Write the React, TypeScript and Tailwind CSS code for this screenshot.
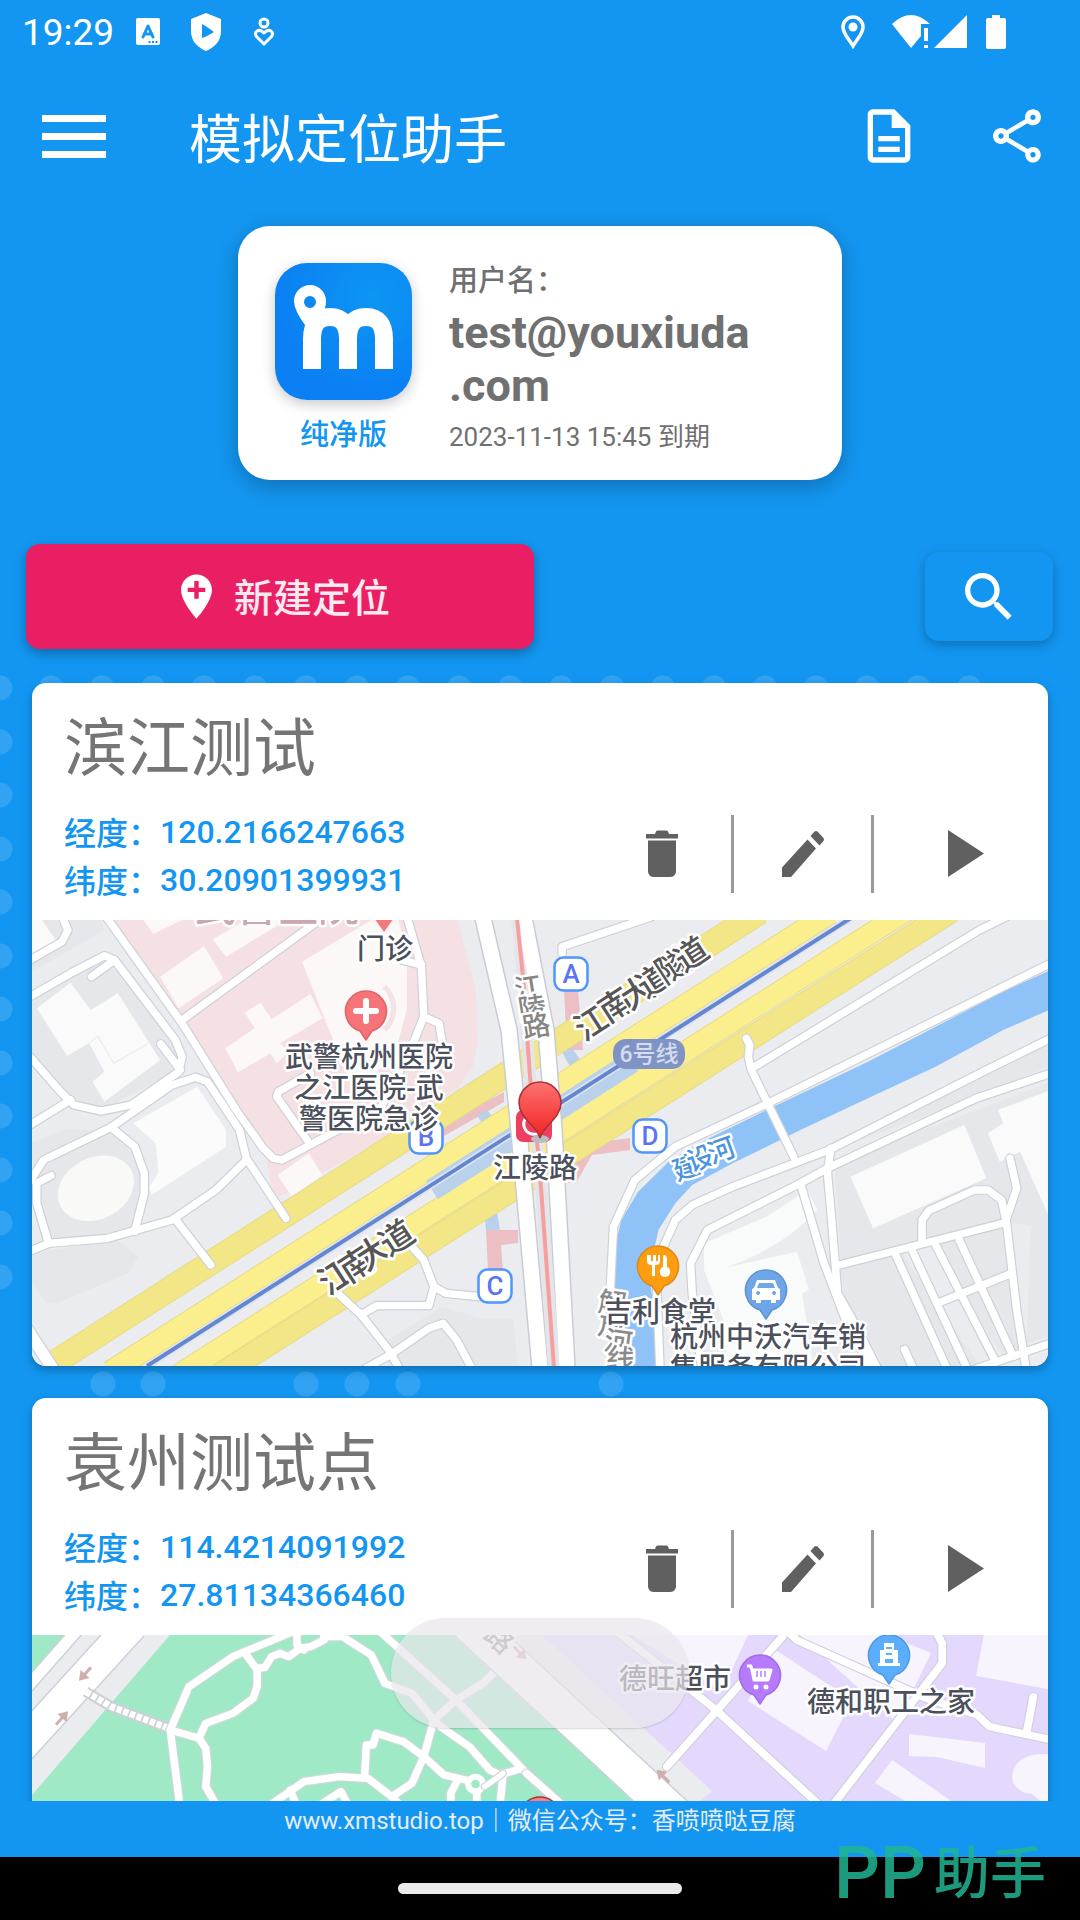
import type { ReactNode } from 'react';
import { MdAddLocation, MdOutlineDescription, MdOutlineShare, MdSearch } from 'react-icons/md';

type RoadsProps = { paths: string[]; width?: number; casing?: string };

// White streets with a thin grey casing, all casings below all fills so junctions merge.
function Roads({ paths, width = 22, casing = '#cdd0d8' }: RoadsProps) {
  return (
    <g fill="none" strokeLinejoin="round" strokeLinecap="round">
      {paths.map((d) => (
        <path key={`c${d}`} d={d} stroke={casing} strokeWidth={width + 7} />
      ))}
      {paths.map((d) => (
        <path key={`f${d}`} d={d} stroke="#fff" strokeWidth={width} />
      ))}
    </g>
  );
}

type LabelProps = {
  x: number | string;
  y: number | string;
  children: string;
  color?: string;
  size?: number;
  rotate?: number;
  anchor?: 'start' | 'middle';
};

function Label({ x, y, children, color = '#4b505c', size = 28, rotate, anchor = 'middle' }: LabelProps) {
  return (
    <text
      x={x}
      y={y}
      rotate={rotate}
      textAnchor={anchor}
      fontSize={size}
      fontWeight={500}
      fill={color}
      stroke="#fff"
      strokeWidth={5}
      strokeLinejoin="round"
      paintOrder="stroke"
    >
      {children}
    </text>
  );
}

function Poi({ x, y, fill, stroke, children }: { x: number; y: number; fill: string; stroke: string; children?: ReactNode }) {
  return (
    <g transform={`translate(${x} ${y})`}>
      <path d="M0 29 L-6 20 A20.5 20.5 0 1 1 6 20 Z" fill={fill} stroke={stroke} strokeWidth="1.500" strokeLinejoin="round" />
      {children}
    </g>
  );
}

function Exit({ x, y, name }: { x: number; y: number; name: string }) {
  return (
    <g transform={`translate(${x} ${y})`}>
      <rect x="-16.500" y="-16.500" width="33" height="33" rx="9" fill="#fff" stroke="#4f95fb" strokeWidth="2.500" />
      <text x="0" y="9" textAnchor="middle" fontSize="26" fontWeight={500} fill="#5a74f2">
        {name}
      </text>
    </g>
  );
}

function BinjiangMap() {
  return (
    <svg viewBox="0 0 1016 446" className="block h-auto w-full bg-[#ebecef]" role="img" aria-label="滨江测试 地图">
      {/* west blocks */}
      <g transform="translate(-2 -10) scale(.338 .3333)">
        <path d="M0 30H210L220 60L100 130L0 190Z" fill="#e5e7ea" />
        <path d="M0 260L220 140L450 430L440 480L210 600L110 570L0 440Z" fill="#e5e7ea" />
        <path d="M0 700L100 660L240 660L330 760L310 960L230 985L50 1000L20 850Z" fill="#e5e7ea" />
        <path d="M0 1030L260 990L320 1040L290 1090L80 1180L50 1180L0 1110Z" fill="#e5e7ea" />
        <path d="M1060 1290L1220 1190L1330 1225H1430L1445 1380H1060Z" fill="#e5e7ea" />
        <path d="M245 30H1265L1320 240L1325 400L1310 470L1270 530L1080 670L720 870L700 750L620 620Z" fill="#f5e1e4" />
        <path d="M20 295L120 218L180 300L260 250L385 450L220 575L185 515L220 485L175 400L110 437Z" fill="#fafafa" />
        <path d="M175 400L200 378L248 460L350 400" fill="none" stroke="#e0e0e2" strokeWidth="2" />
        <path d="M0 30H35L78 92L0 140Z" fill="#fafafa" />
        <path d="M305 640L495 530L580 660V710L360 855L352 830L380 790L372 700Z" fill="#fafbfa" />
        <ellipse cx="195" cy="835" rx="118" ry="92" transform="rotate(-28 195 835)" fill="#f9f9f8" />
        <g fill="#fbf8f7">
          <path d="M385 200L515 108L572 205L440 295Z" />
          <path d="M335 30H450L365 72Z" />
          <path d="M540 88L640 30H760L580 140Z" />
          <path d="M805 155L1010 30H1090L1115 130V300L1080 430L1010 500H940Z" />
          <path d="M635 308L682 278L715 328L830 252L865 325L740 400L765 425L730 460L712 430L615 487L578 415L665 355Z" />
          <path d="M732 795L825 730L865 795L775 860Z" />
        </g>
        <path d="M1048 230C1085 265 1085 325 1048 360" fill="none" stroke="#f3e3e5" strokeWidth="16" />
      </g>

      {/* east blocks and river */}
      <g transform="translate(498 -10) scale(.338 .3333)">
        <path d="M920 1080L1100 1030L1340 1380H1040L930 1180Z M900 760L1532 520V960L1400 930L1160 990L920 1050Z" fill="#e5e7ea" />
        <path d="M1180 1000L1400 940L1470 1300L1400 1340Z M1480 960L1532 900V1280L1470 1300Z" fill="#e5e7ea" />
        <path d="M900 720L1532 400V470L1320 560Z" fill="#e5e7ea" />
        <path
          d="M1540 180V298L1400 360L1200 470L1000 565L800 660L600 760L480 825L430 880L380 960L365 1030L358 1130L385 1400H305L245 1130L255 1000L270 930L320 845L410 755L500 700L720 590L1000 455L1200 350L1400 245Z"
          fill="#8fc3f8"
        />
        <path d="M948 800L1285 645L1350 805L1015 955Z M1385 600L1540 540V930L1450 725L1390 755L1355 670L1400 640Z" fill="#fafafa" />
        <path d="M515 1000L700 920L820 840L850 900Q740 1020 570 1075L790 1025L825 1140L805 1150L840 1380H580V1250L515 1080Z" fill="#f9fbfa" />
      </g>

      {/* metro passages */}
      <path d="M532 70h14l5 60h-16z M542 232l18-9 38-5v12l-38 5-16 28-8 0z M454 310h32v13l-17 2 2 26h-15z M408 206l64-34v10l-60 34z" fill="#ebbfc4" />
      <path d="M452 290l12-4 4 24h-14z M445 196l10-6 14 17-12 5z M530 132l10-4 14 20-12 6z" fill="#b9d1ea" />

      {/* Jiangnan avenue */}
      <g fill="none">
        <g stroke="#e6dc88">
          <path d="M14 448L728 -8" strokeWidth="25" />
          <path d="M78 452L798 -7" strokeWidth="23" />
          <path d="M146 455L874 -9" strokeWidth="22" />
          <path d="M188 455L919 -9" strokeWidth="24" />
        </g>
        <path d="M14 448L728 -8" stroke="#f2e687" strokeWidth="23" />
        <path d="M78 452L798 -7" stroke="#faee8d" strokeWidth="21" />
        <path d="M146 455L874 -9" stroke="#faee8d" strokeWidth="20" />
        <path d="M188 455L919 -9" stroke="#f2e687" strokeWidth="22" />
        <path d="M400 270L600 142" stroke="#b9d1ea" strokeWidth="22" />
        <path d="M115 446L819 -2" stroke="#dfe4f2" strokeWidth="7" />
        <path d="M115 446L819 -2" stroke="#6487cf" strokeWidth="4" />
      </g>

      {/* Jiangling road and line 1 */}
      <g fill="none">
        <path d="M451 -2L477 110L486 200L508 448" stroke="#c9ccd4" strokeWidth="18" />
        <path d="M492 -2L514 110L522 210L535 448" stroke="#c9ccd4" strokeWidth="18" />
        <path d="M485 -2L491 57L498 157L507 240L522 448" stroke="#e4e5e9" strokeWidth="12" />
        <path d="M451 -2L477 110L486 200L508 448" stroke="#fff" strokeWidth="15" />
        <path d="M492 -2L514 110L522 210L535 448" stroke="#fff" strokeWidth="15" />
        <path d="M485 -2L491 57L498 157L507 240L522 448" stroke="#f79f9f" strokeWidth="4" />
      </g>

      <g transform="translate(-2 -10) scale(.338 .3333)">
        <Roads
          paths={[
            'M0 260L120 190L220 137L250 150L430 390L450 440L440 485L300 585L210 603L130 585L90 545L0 440',
            'M250 150L182 200',
            'M0 150L95 95L112 60L95 20',
            'M0 645L120 570',
            'M387 402L445 480',
            'M225 20L450 340L610 600L690 715L720 745L745 750L1040 590L1130 410L1165 320L1158 170L1115 20',
            'M-10 830L40 750L240 652L420 525L490 502L525 515L620 660L640 745L757 925',
            'M240 652L310 710L338 790L338 850L310 965',
            'M62 797L20 820V880L55 1000',
            'M-10 1028L55 1000L230 985L420 930L550 840L640 750',
            'M432 930L535 1065',
            'M450 330L870 20',
            'M985 1380L1065 1335L1180 1255L1222 1240L1262 1290L1315 1390',
            'M910 1150L980 1215L1065 1325L1100 1390',
            'M980 1215L1025 1187H1180L1195 1130L1165 1050L1130 1010',
            'M1195 1130L1230 1150L1330 1160',
            'M820 690L730 560L735 545L830 490',
            'M1165 320L1210 340L1220 400',
            'M1158 165L1100 150',
          ]}
        />
        <Roads paths={['M-20 1240L70 1380']} width={34} />
      </g>

      <g transform="translate(498 -10) scale(.338 .3333)">
        <Roads
          paths={[
            'M95 130V110L360 20',
            'M640 385L650 405L646 440L655 480L780 740',
            'M665 470L1330 60L1410 20',
            'M250 1390L238 1130L247 950L310 810L430 710L700 582L1540 160',
            'M385 1390L375 1130',
            'M395 1010L430 930L480 885L600 830L880 722L1350 480L1540 385',
            'M510 1390L480 1150L475 1060L525 960L800 820L880 775L1320 565L1540 490',
            'M890 715L880 790L890 900L910 1150L960 1240L1035 1390',
            'M800 820L870 1060L930 1220L1015 1390',
            'M915 1065L1400 940',
            'M1160 1000V930L1180 902L1315 840H1355L1395 870L1410 940L1440 1200L1470 1390',
            'M1405 940L1440 835L1420 745',
            'M1080 1030L1240 1390',
            'M1130 1020L1300 1390',
            'M1200 1005L1375 1350',
            'M1270 990L1430 1340',
            'M1205 1180L1425 1090',
            'M1310 1380L1540 1300',
            'M1108 1318L1140 1390',
          ]}
        />
      </g>

      <Label x={245} y={1} size={41} color="#cba8af">武警医院</Label>
      <path d="M342 -2h20l-10 14z" fill="#f27a7c" />
      <Label x={353} y={39}>门诊</Label>

      <Poi x={334} y={91} fill="#f67478" stroke="#dc6468">
        <path d="M-10 0H10M0 -10V10" stroke="#fff" strokeWidth="6" strokeLinecap="round" />
      </Poi>

      <Exit x={539} y={54} name="A" />
      <Exit x={394} y={217} name="B" />
      <Exit x={463} y={366} name="C" />
      <Exit x={618} y={216} name="D" />

      <Label x={337} y={147}>武警杭州医院</Label>
      <Label x={337} y={178}>之江医院-武</Label>
      <Label x={337} y={209}>警医院急诊</Label>

      <Label x="484 488 492" y="80 100 118" rotate={-9} color="#868686" anchor="start">江陵路</Label>
      <Label x="552 576 598 614 633 652" y="122 104 91 79 65 53" rotate={-33} size={33} color="#565656" anchor="start">江南大道隧道</Label>
      <Label x="296 317 334 357" y="376 364 352 337" rotate={-33} size={34} color="#565656" anchor="start">江南大道</Label>
      <Label x="645 659 680" y="261 252 244" rotate={-20} size={27} color="#4a94dc" anchor="start">建设河</Label>

      <rect x="581" y="119" width="72" height="30" rx="13" fill="#7f94c4" />
      <text x="617" y="142" textAnchor="middle" fontSize="23" fontWeight={500} fill="#d5dcee">6号线</text>

      <Label x="565 565 571 573" y="391 414 430 447" rotate={8} color="#8a8a8a" anchor="start">解放河线</Label>

      <Poi x={626} y={346} fill="#fe9d10" stroke="#d98b1c">
        <path d="M-11 -11v6q0 4 4 4h1v11h3V-1h1q4 0 4-4v-6h-2v6h-2v-6h-3v6h-2v-6z" fill="#fff" />
        <path d="M6 -11c2 0 3 2 3 4v8c5 2 4 10-2 10s-7-8-2-10v-8c0-2 0-4 1-4z" fill="#fff" />
      </Poi>
      <Poi x={734} y={370} fill="#6ea6e8" stroke="#5d92d2">
        <path
          d="M-9 -10h18l3 8 2 1v11h-4v3h-5v-3h-10v3h-5v-3h-4v-11l2-1z M-7 -7l-2 5h18l-2-5z M-8 1a2 2 0 1 0 .1 0z M8 1a2 2 0 1 0 .1 0z"
          fill="#fff"
          fillRule="evenodd"
        />
      </Poi>
      <Label x={628} y={402}>吉利食堂</Label>
      <Label x={736} y={427}>杭州中沃汽车销</Label>
      <Label x={736} y={458}>售服务有限公司</Label>

      {/* metro station under the selected position */}
      <rect x="484" y="190" width="36" height="32" rx="7" fill="#ee3f60" />
      <path d="M493 199a10 10 0 0 0 18 10" fill="none" stroke="#fff" strokeWidth="3" />
      <Label x={503} y={258}>江陵路</Label>
      <ellipse cx="508" cy="219" rx="9" ry="4" fill="#b9bcc4" />
      <defs>
        <linearGradient id="marker" x1="0" y1="0" x2="0" y2="1">
          <stop offset="0" stopColor="#fd7272" />
          <stop offset="1" stopColor="#f0221f" />
        </linearGradient>
      </defs>
      <path
        d="M508 218C505 206 487 198 487 183A21 21 0 0 1 529 183C529 198 511 206 508 218Z"
        fill="url(#marker)"
        stroke="#a83232"
        strokeWidth="1.500"
      />
    </svg>
  );
}

function Arrow({ x, y, angle }: { x: number; y: number; angle: number }) {
  return <path transform={`translate(${x} ${y}) rotate(${angle})`} d="M-9 -1.500H0V-6L9 0L0 6V1.500H-9Z" fill="#cfaeae" />;
}

function YuanzhouMap() {
  return (
    <svg viewBox="0 0 1016 446" className="block h-auto w-full bg-[#9fe9c7]" role="img" aria-label="袁州测试点 地图">
      {/* commercial area on the right */}
      <path d="M500 0H1016V446H760L668 166Z" fill="#e4d9fd" />
      <path d="M430 0L600 166L668 166L680 156L510 0Z" fill="#ebecef" />
      <path d="M600 0H716L690 56Z M768 0H855L899 18L865 88Z M952 0H1016V54L944 41Z" fill="#f7f4fe" />
      <path d="M742 14L820 65L794 116L716 66Z M877 99L953 108V133L905 122L877 121Z M860 125L925 170H880L843 148Z" fill="#f7f4fe" />
      <path d="M1016 119Q982 118 980 142Q982 157 1000 159L1016 172Z" fill="#f7f4fe" />

      {/* avenue in the upper left corner */}
      <path d="M0 0H138L0 160Z" fill="#ebecef" />
      <path d="M0 0H38L0 42Z" fill="#9fe9c7" />
      <g fill="none">
        <path d="M-10 58L48 -8" stroke="#cdd0d8" strokeWidth="14" />
        <path d="M-10 58L48 -8" stroke="#fff" strokeWidth="11" />
        <path d="M-24 126L100 -10" stroke="#cdd0d8" strokeWidth="34" />
        <path d="M-24 126L100 -10" stroke="#fff" strokeWidth="31" />
      </g>

      <g transform="translate(-2 -15) scale(.338 .3333)">
        <path d="M165 215L240 260L410 325" fill="none" stroke="#cdd0d8" strokeWidth="32" />
        <path d="M165 215L240 260L410 325" fill="none" stroke="#fff" strokeWidth="20" strokeDasharray="16 5" />
        <Roads
          casing="#cfd8d8"
          paths={[
            'M445 570L415 330L470 200L600 110L790 30',
            'M415 330L500 355L520 310L600 280L660 235L672 200V150L640 105',
            'M500 355L520 385L525 440L520 500L560 570',
            'M672 145L695 142L715 110L740 100L765 110L800 85L830 80L870 60V30',
            'M870 50H925L1010 105L1050 190L1130 220L1195 300L1215 320L1300 380L1360 450L1390 465L1455 445',
            'M790 30V75L810 90',
            'M1020 20L1260 240L1455 445L1600 590',
            'M1195 300L1260 240L1340 190L1425 105',
            'M1195 300L1165 410L1130 490L1070 530L1000 475L915 470L810 485L690 570',
            'M990 470L995 375H1015L1025 340L1105 365L1165 410L1225 465L1290 480',
            'M770 510L790 560',
            'M850 560L920 515L950 570',
            'M1070 530L1110 570',
            'M1265 480L1245 520V570',
            'M1400 460L1390 560',
            'M1322 510V560',
          ]}
        />
        <circle cx="1318" cy="492" r="22" fill="#9fe9c7" stroke="#fff" strokeWidth="18" />
        <Roads casing="#cfd8d8" width={16} paths={['M1345 500L1400 460']} />
      </g>

      <path d="M436 -12L650 186" stroke="#cdd0d8" strokeWidth="38" fill="none" />
      <path d="M436 -12L650 186" stroke="#fff" strokeWidth="35" fill="none" />

      <g transform="translate(498 -15) scale(.3508 .3333)">
        <Roads
          casing="#d3cfdf"
          paths={[
            'M-10 460L140 600',
            'M390 440L720 50',
            'M230 20L525 265L830 560',
            'M720 20L760 60L1130 235L1275 285L1310 320L1490 360',
            'M860 560L1175 130V70L1150 20',
            'M1415 340L1435 230',
          ]}
        />
      </g>

      <Arrow x={53} y={39} angle={132} />
      <Arrow x={30} y={83} angle={-48} />
      <Arrow x={488} y={18} angle={45} />
      <Arrow x={631} y={141} angle={-135} />

      <Label x={450} y={2} size={28} rotate={42} color="#8f8f8f" anchor="start">路</Label>
      <Label x={643} y={54}>德旺超市</Label>
      <Poi x={728} y={40} fill="#b67bfc" stroke="#a06ce2">
        <path d="M-13 -9h4l3 14h14l3-10h-18" fill="#fff" stroke="#fff" strokeWidth="3" strokeLinejoin="round" />
        <path d="M-3 -4v6M1 -4v6M5 -4v6" stroke="#b67bfc" strokeWidth="1.500" />
        <circle cx="-4" cy="12" r="2.500" fill="#fff" />
        <circle cx="6" cy="12" r="2.500" fill="#fff" />
      </Poi>
      <Poi x={857} y={20} fill="#5badfd" stroke="#4d9ae6">
        <path d="M-5 -12H5V-5H9V8H11V11H-11V8H-9V-5H-5Z M-3 -8V-6H3V-8Z M-3 -2V0H3V-2Z M-4 4V8H4V4Z" fill="#fff" fillRule="evenodd" />
      </Poi>
      <Label x={859} y={77}>德和职工之家</Label>
      <circle cx="508" cy="183" r="21" fill="#fd7f7f" stroke="#a83232" strokeWidth="1.500" />
    </svg>
  );
}

function StatusBar() {
  return (
    <div className="flex h-16 items-center justify-between pr-[73px] pl-[22px]">
      <div className="flex items-center">
        <span className="w-[113px] text-[37px] leading-none">19:29</span>
        <svg viewBox="0 0 26 28" className="h-7 w-[26px]" fill="none">
          <rect x="1" y="0" width="24" height="27" rx="2" fill="#fff" />
          <path d="M8 19L13 8L18 19M10 16H16" stroke="#1396f1" strokeWidth="3" strokeLinejoin="round" strokeLinecap="round" />
          <path d="M13.500 24H23" stroke="#1396f1" strokeWidth="2" strokeDasharray="2 1.500" />
        </svg>
        <svg viewBox="0 0 30 38" className="ml-[30px] h-[38px] w-[30px]">
          <path d="M15 0L30 6V18C30 28 24 34 15 38C6 34 0 28 0 18V6Z M11 13V25Q15 24 23 19Q15 13 11 11Z" fill="#fff" fillRule="evenodd" />
        </svg>
        <svg viewBox="0 0 22 30" className="ml-8 h-[30px] w-[22px]" fill="none" stroke="#fff" strokeWidth="3">
          <circle cx="11" cy="6" r="4" />
          <path d="M11 27L3.500 19.500C0 15 6 10.500 11 16C16 10.500 22 15 18.500 19.500Z" strokeLinejoin="round" />
        </svg>
      </div>
      <div className="flex items-center">
        <svg viewBox="0 0 24 34" className="h-[34px] w-6" fill="none">
          <path d="M12 31C8 24 2 19 2 12A10 10 0 0 1 22 12C22 19 16 24 12 31Z" stroke="#fff" strokeWidth="3.500" />
          <circle cx="12" cy="12" r="4.500" fill="#fff" />
        </svg>
        <svg viewBox="0 0 76 34" className="ml-[27px] h-[34px] w-[76px]" fill="#fff">
          <path d="M0 9Q19 -9 38 9H29V21L19 33Z" />
          <path d="M32 13h4v13h-4z M32 30h4v3h-4z" />
          <path d="M42 33L75 0V33Z" />
        </svg>
        <svg viewBox="0 0 22 34" className="ml-[17px] h-[34px] w-[22px]" fill="#fff">
          <path d="M7 0h8v3h4q2 0 2 2v27q0 2-2 2H3q-2 0-2-2V5q0-2 2-2h4z" />
        </svg>
      </div>
    </div>
  );
}

function AppLogo() {
  return (
    <svg viewBox="0 0 137 137" className="h-[137px] w-[137px] rounded-[32px] shadow-[0_4px_14px_rgba(0,0,0,0.22)]" role="img" aria-label="logo">
      <defs>
        <radialGradient id="logo" cx="0.720" cy="0.250" r="0.700">
          <stop offset="0" stopColor="#0d96f2" />
          <stop offset="1" stopColor="#0a80f4" />
        </radialGradient>
      </defs>
      <rect width="137" height="137" fill="url(#logo)" />
      <g fill="none" stroke="#fff">
        <path d="M37 106V76Q37 54 55 54Q73 54 73 76V106M73 76Q73 54 91 54Q109 54 109 76V106" strokeWidth="18" />
      </g>
      <path d="M35 22A16 16 0 0 1 51 38Q51 46 46 55L30 62Q19 47 19 38A16 16 0 0 1 35 22Z M35 33A6 6 0 1 0 35 45A6 6 0 1 0 35 33Z" fill="#fff" fillRule="evenodd" />
    </svg>
  );
}

// Dotted backdrop behind the list: one row on top, one column at the left, a few between cards.
const dots = [
  ...Array.from({ length: 20 }, (_, i) => [i * 51, 35]),
  ...Array.from({ length: 11 }, (_, i) => [0, Math.round(35 + (i + 1) * 53.5)]),
  ...[103, 153, 306, 357, 408, 611].map((x) => [x, 731]),
];

function Backdrop() {
  return (
    <svg className="absolute inset-0 h-full w-full" aria-hidden="true">
      {dots.map(([x, y]) => (
        <circle key={`${x}-${y}`} cx={x} cy={y} r="12.500" fill="#fff" fillOpacity="0.130" />
      ))}
    </svg>
  );
}

type Place = { name: string; lng: string; lat: string; map: ReactNode };

const places: Place[] = [
  { name: '滨江测试', lng: '120.2166247663', lat: '30.20901399931', map: <BinjiangMap /> },
  { name: '袁州测试点', lng: '114.4214091992', lat: '27.81134366460', map: <YuanzhouMap /> },
];

function PlaceCard({ name, lng, lat, map }: Place) {
  return (
    <article className="relative shrink-0 overflow-hidden rounded-[14px] bg-white shadow-[0_4px_10px_rgba(0,0,0,0.28)]">
      <h2 className="px-8 pt-[26px] text-[63px] leading-[80px] text-[#757575]">{name}</h2>
      <div className="flex justify-between pt-[21px] pb-[14px]">
        <dl className="grid grid-cols-[96px_auto] pl-8 text-[#1396f1]">
          <dt className="text-[32px] leading-[48px] font-medium">经度：</dt>
          <dd className="text-[32px] leading-[44px] font-medium">{lng}</dd>
          <dt className="text-[32px] leading-[48px] font-medium">纬度：</dt>
          <dd className="text-[32px] leading-[44px] font-medium">{lat}</dd>
        </dl>
        <div className="mt-[5px] flex h-[78px] text-[#606060]">
          <button type="button" aria-label="删除" className="flex w-[140px] items-center justify-center">
            <svg viewBox="-1 0 48 48" className="h-12 w-12" fill="currentColor">
              <path d="M8 4H17L18 1.500Q18.500 .5 20 .5H28Q29.500 .5 30 1.500L31 4H40V8.500H8Z M10 10.500H38V42Q37 47 32 47H16Q11 47 10 42Z" />
            </svg>
          </button>
          <span className="w-[3px] bg-[#9a9a9a]" />
          <button type="button" aria-label="编辑" className="flex w-[137px] items-center justify-center">
            <svg viewBox="0 0 48 48" className="h-12 w-12" fill="currentColor">
              <path d="M3 37.500L28.500 9.500L37 18.500L12 47H3Z M31.500 6L35.500 1.500Q37 .3 38.500 1.500L44.500 8Q45.500 9.500 44.500 11L40.500 15.500Z" />
            </svg>
          </button>
          <span className="w-[3px] bg-[#9a9a9a]" />
          <button type="button" aria-label="开始" className="flex w-[174px] items-center justify-center">
            <svg viewBox="0 0 48 48" className="h-12 w-12" fill="currentColor">
              <path d="M11 0L47 23.500L11 47Z" />
            </svg>
          </button>
        </div>
      </div>
      {map}
    </article>
  );
}

export default function App() {
  return (
    <div className="relative flex h-screen flex-col overflow-hidden bg-[#1396f1] font-['Roboto','Noto_Sans_CJK_SC',sans-serif] text-white">
      <StatusBar />

      <header className="flex h-36 items-center pr-[31px] pl-[42px]">
        <button type="button" aria-label="菜单" className="flex w-16 flex-col gap-[11px]">
          <span className="h-[7px] bg-white" />
          <span className="h-[7px] bg-white" />
          <span className="h-[7px] bg-white" />
        </button>
        <h1 className="ml-[83px] flex-1 pt-2.5 text-[53px] leading-none">模拟定位助手</h1>
        <button type="button" aria-label="文档">
          <MdOutlineDescription className="h-16 w-16" />
        </button>
        <button type="button" aria-label="分享" className="ml-16">
          <MdOutlineShare className="h-16 w-16" />
        </button>
      </header>

      <section className="mx-auto mt-[18px] flex h-[254px] w-[604px] gap-[37px] rounded-[32px] bg-white px-[37px] pt-[37px] text-[#707070] shadow-[0_6px_22px_rgba(0,0,0,0.26)]">
        <div className="flex flex-col items-center">
          <AppLogo />
          <span className="mt-3 text-[29px] leading-[46px] font-medium text-[#1396f1]">纯净版</span>
        </div>
        <div className="w-[306px]">
          <p className="text-[29px] leading-[36px] font-medium">用户名：</p>
          <p className="mt-[7px] text-[45px] leading-[53px] font-bold [line-break:anywhere]">test@youxiuda.com</p>
          <p className="text-[26px] leading-[50px] whitespace-nowrap">2023-11-13 15:45 到期</p>
        </div>
      </section>

      <div className="mt-16 flex items-center justify-between pr-[27px] pl-[26px]">
        <button
          type="button"
          className="flex h-[105px] w-[508px] items-center justify-center gap-[11px] rounded-[14px] bg-[#ea1f63] shadow-[0_4px_12px_rgba(0,0,0,0.3)]"
        >
          <MdAddLocation className="h-[53px] w-[53px]" />
          <span className="pt-1.5 text-[39px] font-medium text-white/90">新建定位</span>
        </button>
        <button
          type="button"
          aria-label="搜索"
          className="flex h-[89px] w-32 items-center justify-center rounded-[14px] bg-[#1396f1] shadow-[0_4px_12px_rgba(0,0,0,0.25)]"
        >
          <MdSearch className="h-16 w-16" />
        </button>
      </div>

      <main className="relative mt-1 min-h-0 flex-1 overflow-hidden">
        <Backdrop />
        <div className="flex flex-col gap-8 px-8 pt-[30px]">
          {places.map((place) => (
            <PlaceCard key={place.name} {...place} />
          ))}
        </div>
        <div className="absolute bottom-[73px] left-1/2 h-[110px] w-[298px] -translate-x-1/2 rounded-full bg-[#eae5ec]/70 shadow-[0_1px_2px_rgba(0,0,0,0.15)]" />
      </main>

      <footer className="h-14 text-center text-[24px] leading-[40px] text-[#e6edf3]">
        <a href="#top">www.xmstudio.top</a>｜微信公众号：香喷喷哒豆腐
      </footer>

      <nav className="flex h-[63px] items-center justify-center bg-black">
        <span className="h-[11px] w-[284px] rounded-full bg-[#ebebeb]" />
      </nav>

      <div className="absolute right-[34px] bottom-2.5 flex gap-2 font-medium text-[#22b594]/85">
        <span className="text-[72px] leading-[72px]">PP</span>
        <span className="text-[56px] leading-[72px]">助手</span>
      </div>
    </div>
  );
}
